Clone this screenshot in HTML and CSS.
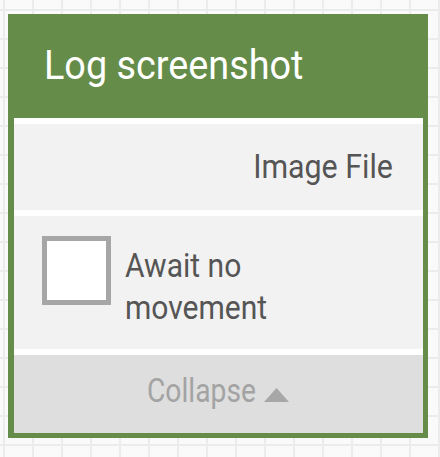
FILE: index.html
```html
<!DOCTYPE html>
<html>
<head>
<meta charset="utf-8">
<link rel="stylesheet" href="styles.css">
</head>
<body>
<div class="card">
  <div class="header"><span class="title">Log screenshot</span></div>
  <div class="section out-row"><span class="label right">Image File</span></div>
  <div class="section check-row">
    <div class="checkbox"></div>
    <span class="label left">Await no<br>movement</span>
  </div>
  <div class="collapse">
    <span class="collapse-text">Collapse</span>
    <svg class="tri" width="25" height="14" viewBox="0 0 25 14"><polygon points="12.5,0 25,14 0,14" fill="#a7a7a7"/></svg>
  </div>
</div>
</body>
</html>
```
FILE: styles.css
```css
html, body {
  margin: 0;
  padding: 0;
}
body {
  width: 440px;
  height: 457px;
  overflow: hidden;
  font-family: Roboto, "Liberation Sans", sans-serif;
  background-color: #fafafa;
  background-image:
    linear-gradient(to right, #ececec 0, #ececec 2px, transparent 2px),
    linear-gradient(to bottom, #ececec 0, #ececec 2px, transparent 2px);
  background-size: 29px 29px;
  background-position: 3px 9px;
}
.card {
  margin: 14px 0 0 8px;
  width: 420px;
  box-sizing: border-box;
  border-style: solid;
  border-color: #658c48;
  border-width: 0 5px 5px 6px;
  background: #ffffff;
}
.header {
  height: 104px;
  margin-left: -6px;
  margin-right: -5px;
  background: #658c48;
  box-sizing: border-box;
  padding: 28px 0 0 36px;
}
.title {
  display: inline-block;
  color: #ffffff;
  font-size: 40px;
  line-height: 48px;
  transform: scaleX(0.945);
  transform-origin: left center;
  white-space: nowrap;
}
.section {
  border-top: 6px solid #ffffff;
  background: #f2f2f2;
}
.out-row {
  height: 86px;
  display: flex;
  align-items: center;
  justify-content: flex-end;
  padding-right: 30px;
}
.label {
  display: inline-block;
  color: #555555;
  font-size: 33px;
  line-height: 42px;
  white-space: nowrap;
}
.right {
  transform: scaleX(0.92);
  transform-origin: right center;
}
.left {
  transform: scaleX(0.91);
  transform-origin: left center;
}
.check-row {
  height: 113px;
  display: flex;
  align-items: flex-start;
  padding: 20px 0 0 28px;
}
.checkbox {
  width: 69px;
  height: 69px;
  box-sizing: border-box;
  border: 5px solid #a6a6a6;
  background: #ffffff;
  flex: none;
}
.check-row .label {
  margin-left: 14px;
  margin-top: 9px;
}
.collapse {
  border-top: 6px solid #ffffff;
  background: #dedede;
  height: 63px;
  display: flex;
  align-items: flex-start;
  justify-content: flex-start;
  padding: 15px 0 0 133px;
}
.collapse-text {
  display: inline-block;
  color: #a3a3a3;
  font-size: 34px;
  line-height: 40px;
  white-space: nowrap;
  transform: scaleX(0.83);
  transform-origin: left center;
  margin-right: -14px;
}
.tri {
  display: block;
  flex: none;
  margin-top: 18px;
}
```
